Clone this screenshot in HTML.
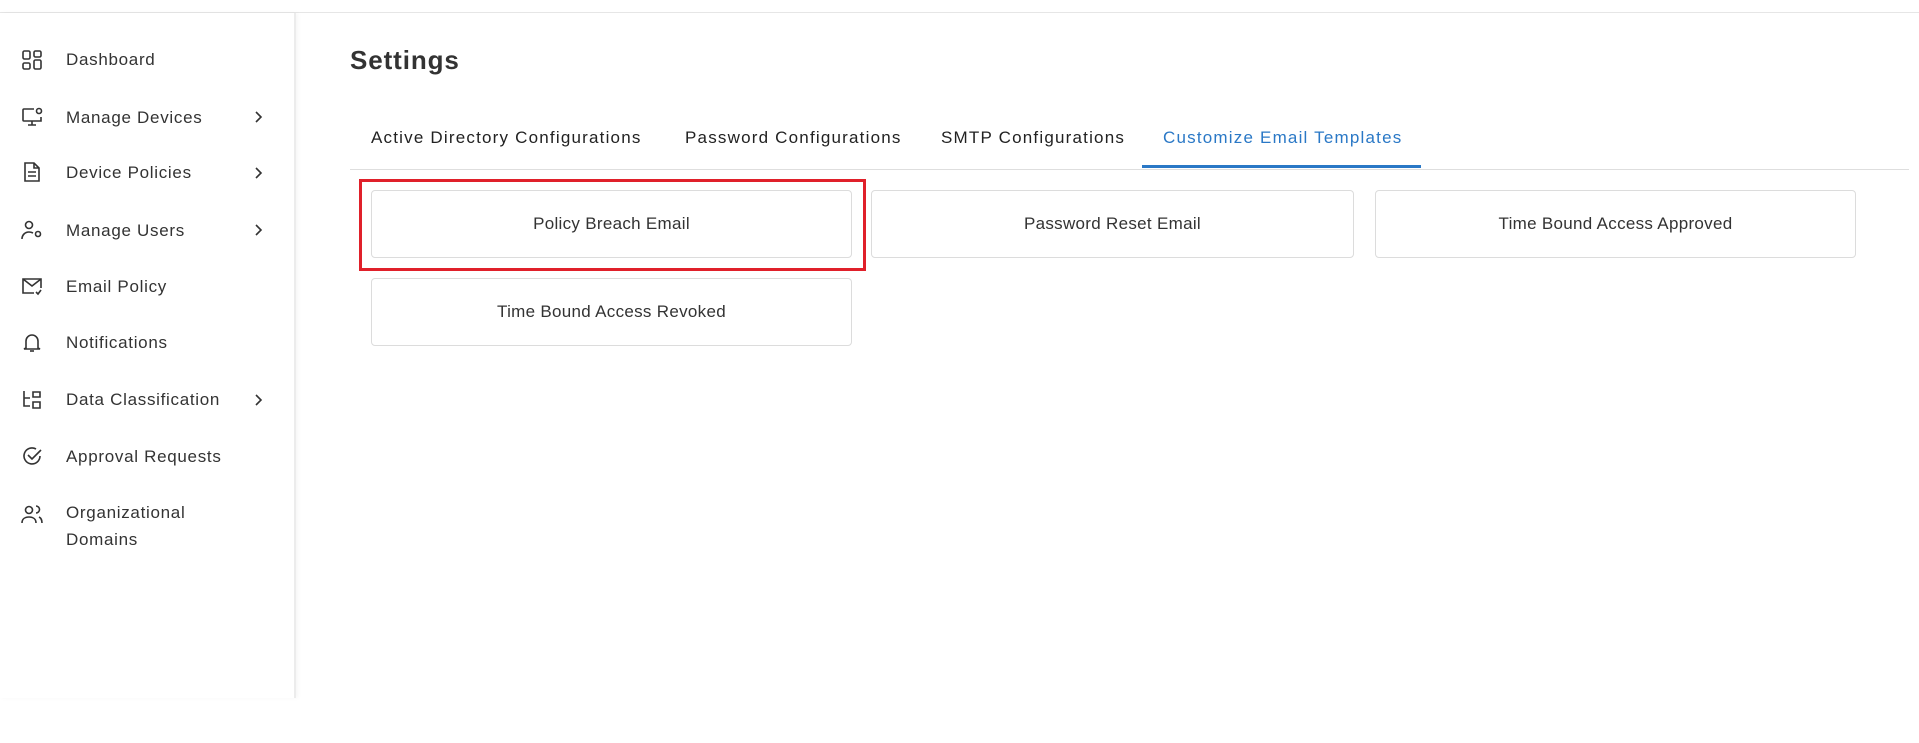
<!DOCTYPE html>
<html><head><style>
*{margin:0;padding:0;box-sizing:border-box}
body{width:1919px;height:743px;background:#fff;font-family:"Liberation Sans",sans-serif;color:#333;position:relative;overflow:hidden}
.topline{position:absolute;left:0;top:12px;width:1919px;height:1px;background:#e6e6e6}
.side{position:absolute;left:0;top:13px;width:296px;height:685px;border-right:2px solid #ececec;box-shadow:2px 0 4px rgba(0,0,0,.04)}
.it{position:absolute;left:66px;font-size:17px;color:#333;line-height:27px;letter-spacing:.7px}
.ic{position:absolute;left:20px;width:24px;height:24px}
.ch{position:absolute;left:252px;width:14px;height:14px}
h1{position:absolute;left:350px;top:45px;font-size:26px;font-weight:bold;color:#333;letter-spacing:.9px}
.tab{position:absolute;top:128px;font-size:17px;color:#222;letter-spacing:1.2px}
.card{position:absolute;border:1px solid #dcdcdc;border-radius:4px;background:#fff;font-size:17px;color:#333;display:flex;align-items:center;justify-content:center;letter-spacing:.3px}
</style></head><body>
<div class="topline"></div>
<div class="side">
<svg class="ic" style="top:35px" viewBox="0 0 24 24" fill="none" stroke="#333" stroke-width="1.6"><rect x="3" y="3" width="7" height="8" rx="1.5"/><rect x="3" y="15" width="7" height="6" rx="1.5"/><rect x="14" y="3" width="7" height="6" rx="1.5"/><rect x="14" y="12" width="7" height="9" rx="1.5"/></svg>
<div class="it" style="top:33px">Dashboard</div>
<svg class="ic" style="top:92px" viewBox="0 0 24 24" fill="none" stroke="#333" stroke-width="1.6"><path d="M14 4H4a1 1 0 0 0-1 1v10a1 1 0 0 0 1 1h17v-4"/><path d="M12 16v4M8 20h8"/><circle cx="19" cy="6" r="2.5"/></svg>
<div class="it" style="top:91px">Manage Devices</div>
<svg class="ch" style="top:97px" viewBox="0 0 14 14" fill="none" stroke="#333" stroke-width="1.6"><path d="M4 2l5 5-5 5"/></svg>
<svg class="ic" style="top:147px" viewBox="0 0 24 24" fill="none" stroke="#333" stroke-width="1.6"><path d="M5 3h9l5 5v13H5z"/><path d="M14 3v5h5M8 12h8M8 16h8"/></svg>
<div class="it" style="top:146px">Device Policies</div>
<svg class="ch" style="top:153px" viewBox="0 0 14 14" fill="none" stroke="#333" stroke-width="1.6"><path d="M4 2l5 5-5 5"/></svg>
<svg class="ic" style="top:205px" viewBox="0 0 24 24" fill="none" stroke="#333" stroke-width="1.6"><circle cx="9" cy="7" r="3.5"/><path d="M2 21c0-4 3-7 7-7 2 0 3 .5 4 1"/><circle cx="18" cy="16" r="2.5"/></svg>
<div class="it" style="top:204px">Manage Users</div>
<svg class="ch" style="top:210px" viewBox="0 0 14 14" fill="none" stroke="#333" stroke-width="1.6"><path d="M4 2l5 5-5 5"/></svg>
<svg class="ic" style="top:261px" viewBox="0 0 24 24" fill="none" stroke="#333" stroke-width="1.6"><path d="M21 14V5H3v14h11"/><path d="M3 5l9 7 9-7M16 18l2 2 3-4"/></svg>
<div class="it" style="top:260px">Email Policy</div>
<svg class="ic" style="top:318px" viewBox="0 0 24 24" fill="none" stroke="#333" stroke-width="1.6"><path d="M6 17V10a6 6 0 0 1 12 0v7l2 1H4z"/><path d="M10 20h4"/></svg>
<div class="it" style="top:316px">Notifications</div>
<svg class="ic" style="top:375px" viewBox="0 0 24 24" fill="none" stroke="#333" stroke-width="1.6"><path d="M4 3v15h6M4 10h6"/><path d="M13 4h7v5h-7zM13 14h7v6h-7z"/></svg>
<div class="it" style="top:373px">Data Classification</div>
<svg class="ch" style="top:380px" viewBox="0 0 14 14" fill="none" stroke="#333" stroke-width="1.6"><path d="M4 2l5 5-5 5"/></svg>
<svg class="ic" style="top:431px" viewBox="0 0 24 24" fill="none" stroke="#333" stroke-width="1.6"><path d="M20 12a8 8 0 1 1-4-7"/><path d="M8 11l4 4 9-9"/></svg>
<div class="it" style="top:430px">Approval Requests</div>
<svg class="ic" style="top:489px" viewBox="0 0 24 24" fill="none" stroke="#333" stroke-width="1.6"><circle cx="9" cy="8" r="3.5"/><path d="M2 21c0-4 3-6 7-6s7 2 7 6M16 4a3.5 3.5 0 0 1 0 7M19 15c2 1 3 3 3 6"/></svg>
<div class="it" style="top:486px">Organizational<br>Domains</div>
</div>
<h1>Settings</h1>
<div class="tab" style="left:371px">Active Directory Configurations</div>
<div class="tab" style="left:685px">Password Configurations</div>
<div class="tab" style="left:941px">SMTP Configurations</div>
<div class="tab" style="left:1163px;color:#2a78c6">Customize Email Templates</div>
<div style="position:absolute;left:350px;top:169px;width:1559px;height:1px;background:#dedede"></div>
<div style="position:absolute;left:1142px;top:165px;width:279px;height:3px;background:#2a78c6"></div>
<div style="position:absolute;left:359px;top:179px;width:507px;height:92px;border:3px solid #e0202a"></div>
<div class="card" style="left:371px;top:190px;width:481px;height:68px">Policy Breach Email</div>
<div class="card" style="left:871px;top:190px;width:483px;height:68px">Password Reset Email</div>
<div class="card" style="left:1375px;top:190px;width:481px;height:68px">Time Bound Access Approved</div>
<div class="card" style="left:371px;top:278px;width:481px;height:68px">Time Bound Access Revoked</div>
</body></html>
